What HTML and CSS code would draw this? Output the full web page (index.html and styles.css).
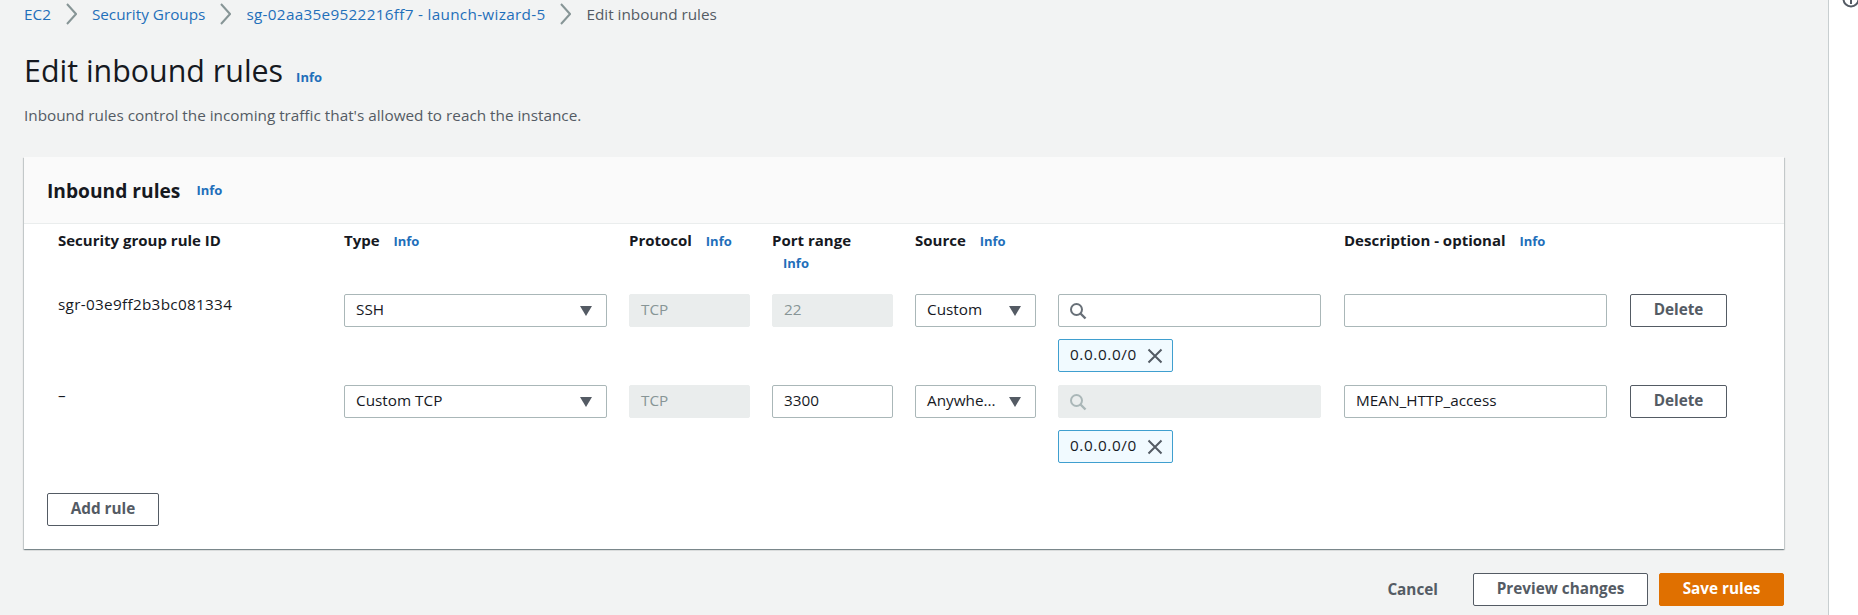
FILE: index.html
```html
<!DOCTYPE html>
<html lang="en">
<head>
    <meta charset="UTF-8">
    <meta name="viewport" content="width=device-width, initial-scale=1.0">
    <title>Edit inbound rules</title>
    <link rel="stylesheet" href="styles.css">
</head>
<body>
    <div class="page">
        <main class="content">
            <!-- Breadcrumbs -->
            <nav class="breadcrumbs">
                <a href="#">EC2</a>
                <svg class="crumb-sep" width="11" height="22" viewBox="0 0 11 22"><path d="M1 1l9 10-9 10" fill="none" stroke="#879596" stroke-width="2"/></svg>
                <a href="#">Security Groups</a>
                <svg class="crumb-sep" width="11" height="22" viewBox="0 0 11 22"><path d="M1 1l9 10-9 10" fill="none" stroke="#879596" stroke-width="2"/></svg>
                <a class="crumb-id" href="#">sg-02aa35e9522216ff7 - launch-wizard-5</a>
                <svg class="crumb-sep" width="11" height="22" viewBox="0 0 11 22"><path d="M1 1l9 10-9 10" fill="none" stroke="#879596" stroke-width="2"/></svg>
                <span>Edit inbound rules</span>
            </nav>

            <!-- Page title -->
            <div class="page-title">
                <h1>Edit inbound rules</h1>
                <a class="info" href="#">Info</a>
            </div>
            <p class="page-desc">Inbound rules control the incoming traffic that's allowed to reach the instance.</p>

            <!-- Rules panel -->
            <section class="panel">
                <header class="panel-header">
                    <h2>Inbound rules</h2>
                    <a class="info" href="#">Info</a>
                </header>

                <div class="panel-body">
                    <div class="rule-grid head-row">
                        <div class="col-label">Security group rule ID</div>
                        <div class="col-label">Type <a class="info" href="#">Info</a></div>
                        <div class="col-label">Protocol <a class="info" href="#">Info</a></div>
                        <div class="col-label port-label">Port range <a class="info" href="#">Info</a></div>
                        <div class="col-label">Source <a class="info" href="#">Info</a></div>
                        <div></div>
                        <div class="col-label">Description - optional <a class="info" href="#">Info</a></div>
                        <div></div>
                    </div>

                    <!-- SSH rule -->
                    <div class="rule-grid rule-row">
                        <div class="rule-id">sgr-03e9ff2b3bc081334</div>
                        <div class="field select">SSH<span class="caret"></span></div>
                        <div class="field disabled">TCP</div>
                        <div class="field disabled">22</div>
                        <div class="field select">Custom<span class="caret"></span></div>
                        <div class="source-cell">
                            <div class="field search">
                                <svg width="18" height="18" viewBox="0 0 18 18"><circle cx="7.5" cy="7.5" r="5.5" fill="none" stroke="#687078" stroke-width="2"/><path d="M11.5 11.5l5 5" stroke="#687078" stroke-width="2.4"/></svg>
                            </div>
                            <div class="token">0.0.0.0/0
                                <svg width="16" height="16" viewBox="0 0 16 16"><path d="M1.5 1.5l13 13M14.5 1.5l-13 13" stroke="#545b64" stroke-width="2"/></svg>
                            </div>
                        </div>
                        <div class="field"></div>
                        <button class="btn">Delete</button>
                    </div>

                    <!-- Custom TCP rule -->
                    <div class="rule-grid rule-row">
                        <div class="rule-id">–</div>
                        <div class="field select">Custom TCP<span class="caret"></span></div>
                        <div class="field disabled">TCP</div>
                        <div class="field">3300</div>
                        <div class="field select">Anywhe...<span class="caret"></span></div>
                        <div class="source-cell">
                            <div class="field search disabled">
                                <svg width="18" height="18" viewBox="0 0 18 18"><circle cx="7.5" cy="7.5" r="5.5" fill="none" stroke="#aab7b8" stroke-width="2"/><path d="M11.5 11.5l5 5" stroke="#aab7b8" stroke-width="2.4"/></svg>
                            </div>
                            <div class="token">0.0.0.0/0
                                <svg width="16" height="16" viewBox="0 0 16 16"><path d="M1.5 1.5l13 13M14.5 1.5l-13 13" stroke="#545b64" stroke-width="2"/></svg>
                            </div>
                        </div>
                        <div class="field">MEAN_HTTP_access</div>
                        <button class="btn">Delete</button>
                    </div>

                    <button class="btn add-rule">Add rule</button>
                </div>
            </section>

            <!-- Footer actions -->
            <div class="actions">
                <a class="cancel" href="#">Cancel</a>
                <button class="btn preview">Preview changes</button>
                <button class="btn primary">Save rules</button>
            </div>
        </main>

        <aside class="side-rail">
            <svg class="rail-icon" width="18" height="18" viewBox="0 0 18 18"><circle cx="9" cy="9" r="7.5" fill="none" stroke="#545b64" stroke-width="2"/><path d="M9 8v6" stroke="#545b64" stroke-width="2"/></svg>
        </aside>
    </div>
</body>
</html>
```

FILE: styles.css
```css
/* Page frame */
* {
    box-sizing: border-box;
}

body {
    margin: 0;
    font-family: "Open Sans", Arial, sans-serif;
    font-size: 15.3px;
    color: #16191f;
    background-color: #fff;
    overflow: hidden;
}

a {
    color: #1f6fba;
    text-decoration: none;
}

.page {
    display: flex;
    width: 1858px;
    height: 615px;
}

.content {
    width: 1829px;
    height: 615px;
    padding: 0 44px 0 24px;
    background-color: #f2f3f3;
    border-right: 1px solid #c8ced0;
}

.side-rail {
    flex: 1;
    position: relative;
}

.rail-icon {
    position: absolute;
    left: 13px;
    top: -10px;
}

/* Breadcrumbs */
.breadcrumbs {
    display: flex;
    align-items: center;
    gap: 15px;
    height: 28px;
    color: #545b64;
}

.crumb-sep {
    flex: none;
}

.crumb-id {
    letter-spacing: 0.3px;
}

/* Title */
.page-title {
    display: flex;
    align-items: baseline;
    gap: 13px;
    margin-top: 22px;
    height: 42px;
}

h1 {
    margin: 0;
    font-size: 30.4px;
    line-height: 42px;
    font-weight: 400;
}

.info {
    font-size: 13px;
    font-weight: 700;
}

.page-desc {
    margin: 12px 0 0;
    height: 22px;
    line-height: 22px;
    color: #545b64;
}

/* Panel */
.panel {
    margin-top: 31px;
    height: 392px;
    background-color: #fff;
    box-shadow: 0 1px 1px 0 rgba(0, 28, 36, 0.3), 1px 1px 1px 0 rgba(0, 28, 36, 0.15), -1px 1px 1px 0 rgba(0, 28, 36, 0.15);
}

.panel-header {
    display: flex;
    align-items: center;
    gap: 16px;
    height: 67px;
    padding: 0 22px 0 23px;
    background-color: #fafafa;
    border-bottom: 1px solid #eaeded;
}

h2 {
    margin: 0;
    font-size: 19.2px;
    font-weight: 700;
}

.panel-body {
    padding: 5px 23px 0;
}

.rule-grid {
    display: grid;
    grid-template-columns: 264px 263px 121px 121px 121px 264px 264px 97px;
    gap: 22px;
    padding-left: 11px;
}

.head-row {
    height: 65px;
}

.col-label {
    font-size: 15px;
    font-weight: 700;
    line-height: 23px;
}

.col-label .info {
    margin-left: 10px;
}

.port-label .info {
    display: block;
    margin-left: 11px;
}

.rule-row {
    height: 91px;
    align-items: start;
}

.rule-id {
    line-height: 20px;
    letter-spacing: 0.3px;
}

/* Form controls */
.field {
    display: flex;
    align-items: center;
    justify-content: space-between;
    max-width: 263px;
    height: 33px;
    padding: 0 14px 4px 11px;
    background-color: #fff;
    border: 1px solid #aab7b8;
    border-radius: 2px;
}

.field.disabled {
    color: #879596;
    background-color: #eaeded;
    border-color: #eaeded;
}

.field.search {
    justify-content: flex-start;
    padding: 0 10px;
}

.caret {
    width: 0;
    height: 0;
    margin-top: 4px;
    border-left: 6px solid transparent;
    border-right: 6px solid transparent;
    border-top: 10px solid #545b64;
}

.token {
    display: flex;
    align-items: center;
    justify-content: space-between;
    width: 115px;
    height: 33px;
    margin-top: 12px;
    padding: 0 9px 4px 11px;
    letter-spacing: 0.6px;
    background-color: #f1faff;
    border: 1px solid #3f9fcf;
    border-radius: 2px;
}

.token svg {
    margin-top: 4px;
}

/* Buttons */
.btn {
    height: 33px;
    padding: 0 20px 4px;
    font-family: inherit;
    font-size: 15.3px;
    font-weight: 700;
    color: #545b64;
    background-color: #fff;
    border: 1px solid #545b64;
    border-radius: 2px;
    cursor: pointer;
}

.add-rule {
    display: block;
    width: 112px;
    margin-top: 17px;
}

.actions {
    display: flex;
    align-items: center;
    justify-content: flex-end;
    margin-top: 24px;
}

.cancel {
    margin-right: 35px;
    padding-bottom: 2px;
    font-weight: 700;
    color: #545b64;
}

.preview {
    width: 175px;
    margin-right: 11px;
}

.primary {
    width: 125px;
    color: #fff;
    background-color: #e07000;
    border-color: #e07000;
}
```
